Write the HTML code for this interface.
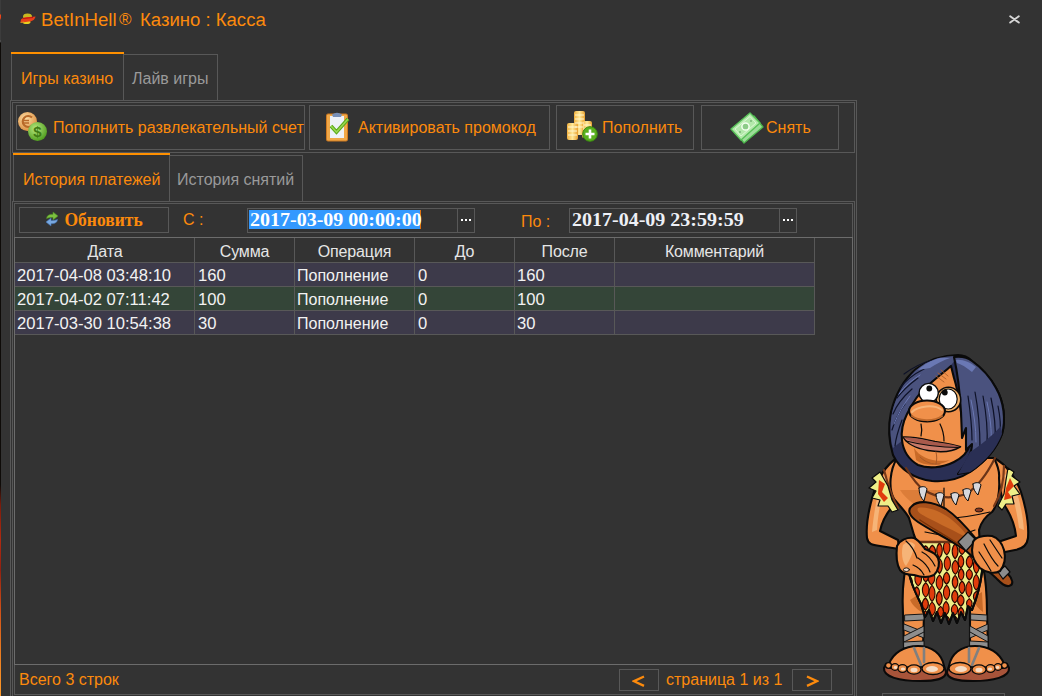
<!DOCTYPE html>
<html><head><meta charset="utf-8">
<style>
html,body{margin:0;padding:0;}
body{width:1042px;height:696px;background:#333333;position:relative;overflow:hidden;font-family:"Liberation Sans",sans-serif;}
.a{position:absolute;}
.b{position:absolute;box-sizing:border-box;border:1px solid #585858;}
.t{position:absolute;white-space:pre;font-size:16px;line-height:18px;}
.or{color:#fc8a0c;}
.hl{position:absolute;height:1px;background:#585858;}
.vl{position:absolute;width:1px;background:#585858;}
.cell{position:absolute;white-space:pre;font-size:16.6px;line-height:18px;color:#f2f2f2;}
.hd{position:absolute;white-space:pre;font-size:16px;letter-spacing:-0.15px;line-height:18px;color:#e6e6e6;text-align:center;}
</style></head>
<body>
<!-- left edge strip -->
<div class="a" style="left:0;top:0;width:1px;height:696px;background:linear-gradient(#3c3c3c 0,#3c3c3c 14px,#f04a1a 15px,#e8401a 18px,#3c3c3c 20px,#3c3c3c 40px,#5a5a5a 41px,#3c3c3c 42px,#0e0b08 43px,#0e0b08 485px,#7a1c0c 505px,#b02a10 540px,#902010 570px,#d05018 610px,#e87a20 650px,#ff9a28 696px);"></div>

<!-- title -->
<svg class="a" style="left:16px;top:8px" width="24" height="20" viewBox="16 8 24 20">
  <ellipse cx="27.5" cy="16.5" rx="4.5" ry="3" fill="#c8b820"/>
  <ellipse cx="26.5" cy="22" rx="4" ry="2" fill="#e8d020"/>
  <path d="M21 19.5 C24 16.5 30 17 35.5 16.5 C35 19 33 21.5 29 21.5 C26 22 22 22.5 20.5 22 Z" fill="#e8401a"/>
  <path d="M23 18.5 L33 17.5" stroke="#c01010" stroke-width="1"/>
  <path d="M20.5 22.5 L24 22" stroke="#d89020" stroke-width="1.2"/>
</svg>
<div class="t or" style="left:41px;top:10px;font-size:18px;line-height:20px;transform:scaleX(1.035);transform-origin:0 0;">BetInHell</div>
<div class="t or" style="left:119px;top:10px;font-size:17px;line-height:20px;">®</div>
<div class="t or" style="left:139.5px;top:10px;font-size:18px;line-height:20px;transform:scaleX(1.03);transform-origin:0 0;">Казино : Касса</div>
<!-- close -->
<svg class="a" style="left:1002px;top:8px" width="24" height="22" viewBox="1002 8 24 22">
  <path d="M1010.2 16.3 L1018.8 22.6 M1018.8 16.3 L1010.2 22.6" stroke="#d6d6d6" stroke-width="1.9" stroke-linecap="round"/>
</svg>

<!-- outer tabs -->
<div class="a" style="left:11px;top:52px;width:113px;height:2px;background:#ff9000;"></div>
<div class="vl" style="left:11px;top:54px;height:46px;"></div>
<div class="vl" style="left:123px;top:54px;height:46px;"></div>
<div class="t or" style="left:21px;top:70px;">Игры казино</div>
<div class="hl" style="left:123px;top:54px;width:95px;"></div>
<div class="vl" style="left:217px;top:54px;height:46px;"></div>
<div class="t" style="left:132px;top:70px;color:#9a9a9a;">Лайв игры</div>

<!-- outer panel -->
<div class="hl" style="left:10px;top:100px;width:847px;"></div>
<div class="vl" style="left:10px;top:100px;height:596px;"></div>
<div class="vl" style="left:856px;top:100px;height:596px;"></div>

<!-- toolbar groupbox -->
<div class="b" style="left:12px;top:102px;width:843px;height:51px;"></div>
<div class="b" style="left:16px;top:105px;width:289px;height:45px;"></div>
<div class="b" style="left:309px;top:105px;width:241px;height:45px;"></div>
<div class="b" style="left:556px;top:105px;width:138px;height:45px;"></div>
<div class="b" style="left:701px;top:105px;width:138px;height:45px;"></div>

<!-- icon 1: coins -->
<svg class="a" style="left:17px;top:111px" width="32" height="32" viewBox="0 0 32 32">
  <defs>
    <radialGradient id="gE" cx="0.4" cy="0.35" r="0.7"><stop offset="0" stop-color="#ffe0a8"/><stop offset="1" stop-color="#d98a3a"/></radialGradient>
    <radialGradient id="gD" cx="0.4" cy="0.35" r="0.7"><stop offset="0" stop-color="#b8e880"/><stop offset="1" stop-color="#4a9a1a"/></radialGradient>
  </defs>
  <circle cx="10.5" cy="10.5" r="9.5" fill="url(#gE)"/>
  <path d="M15 6.5 A5.5 5.5 0 1 0 15 14.5" stroke="#b86a2a" stroke-width="2.2" fill="none"/>
  <path d="M5 9.5 H12 M5 12 H12" stroke="#b86a2a" stroke-width="1.3"/>
  <circle cx="20.5" cy="20.5" r="9.5" fill="url(#gD)"/>
  <text x="20.5" y="26" font-family="Liberation Sans" font-weight="bold" font-size="15" fill="#3f7a14" text-anchor="middle">$</text>
</svg>
<div class="t or" style="left:53px;top:119px;">Пополнить развлекательный счет</div>

<!-- icon 2: clipboard -->
<svg class="a" style="left:324px;top:110px" width="28" height="33" viewBox="0 0 28 33">
  <rect x="2.5" y="4" width="21" height="27" rx="1.5" fill="#f0a848" stroke="#d07a20" stroke-width="1"/>
  <rect x="6" y="6" width="14" height="22" fill="#eef2f8"/>
  <path d="M8 4.5 Q13 1 18 4.5 L17 7 H9 Z" fill="#7890b8"/>
  <path d="M7 16 L12.5 22 L24 9" stroke="#58a818" stroke-width="3.6" fill="none" stroke-linejoin="miter"/>
  <path d="M7 16 L12.5 22 L24 9" stroke="#98d850" stroke-width="1.6" fill="none"/>
</svg>
<div class="t or" style="left:358px;top:119px;">Активировать промокод</div>

<!-- icon 3: coin stacks -->
<svg class="a" style="left:565px;top:110px" width="34" height="34" viewBox="0 0 34 34">
  <defs><linearGradient id="gC" x1="0" x2="1"><stop offset="0" stop-color="#f0b040"/><stop offset="0.5" stop-color="#ffe898"/><stop offset="1" stop-color="#e8a030"/></linearGradient></defs>
  <rect x="9" y="1" width="11" height="24" rx="2" fill="url(#gC)"/>
  <rect x="17" y="11" width="10" height="17" rx="2" fill="url(#gC)"/>
  <rect x="2" y="13" width="11" height="17" rx="2" fill="url(#gC)"/>
  <g stroke="#fff6d0" stroke-width="1">
    <path d="M10 5H19M10 9H19M10 13H19M10 17H19M3 17H12M3 21H12M3 25H12M18 15H26M18 19H26"/>
  </g>
  <circle cx="25" cy="24" r="7.3" fill="#5ab01e" stroke="#3a8a10" stroke-width="1"/>
  <path d="M25 19.5V28.5M20.5 24H29.5" stroke="#fff" stroke-width="2.6"/>
</svg>
<div class="t or" style="left:602px;top:119px;">Пополнить</div>

<!-- icon 4: banknote -->
<svg class="a" style="left:726px;top:106px" width="40" height="40" viewBox="726 106 40 40">
  <polygon points="735,132 754,116 763,127 744,143" fill="#9cdc98" stroke="#4cb84c" stroke-width="1.3" stroke-linejoin="round"/>
  <polygon points="731,129 750,113 760,123 741,140" fill="#b2e8aa" stroke="#58c058" stroke-width="1.4" stroke-linejoin="round"/>
  <polygon points="735,129 750,116.5 756,123 741,136" fill="none" stroke="#dcf8d4" stroke-width="1"/>
  <circle cx="745.5" cy="126.5" r="3.6" fill="#8ccc88" stroke="#f4fff0" stroke-width="1.5"/>
  <circle cx="751" cy="121" r="0.9" fill="#70b070"/><circle cx="740" cy="132" r="0.9" fill="#70b070"/>
</svg>
<div class="t or" style="left:766px;top:119px;">Снять</div>

<!-- inner tabs -->
<div class="a" style="left:13px;top:153px;width:157px;height:2px;background:#ff9000;"></div>
<div class="vl" style="left:13px;top:155px;height:46px;"></div>
<div class="vl" style="left:169px;top:155px;height:46px;"></div>
<div class="t or" style="left:23px;top:171px;">История платежей</div>
<div class="hl" style="left:169px;top:155px;width:134px;"></div>
<div class="vl" style="left:302px;top:155px;height:46px;"></div>
<div class="t" style="left:177px;top:171px;color:#9a9a9a;">История снятий</div>

<!-- inner pane -->
<div class="hl" style="left:12px;top:201px;width:843px;"></div>
<div class="vl" style="left:12px;top:201px;height:495px;"></div>
<div class="vl" style="left:854px;top:201px;height:495px;"></div>

<!-- filter groupbox -->
<div class="hl" style="left:14px;top:203px;width:839px;"></div>
<div class="vl" style="left:14px;top:203px;height:34px;"></div>
<div class="vl" style="left:852px;top:203px;height:34px;"></div>
<div class="b" style="left:19px;top:207px;width:150px;height:26px;"></div>
<svg class="a" style="left:44px;top:211px" width="16" height="16" viewBox="0 0 16 16">
  <path d="M2.5 7.5 Q3 3 9 3.2 V1 L14 5 L9 9 V6.6 Q5 6.4 2.5 7.5Z" fill="#7cc040" stroke="#4a8a20" stroke-width="0.6"/>
  <path d="M13.5 8.5 Q13 13 7 12.8 V15 L2 11 L7 7 V9.4 Q11 9.6 13.5 8.5Z" fill="#78a8e0" stroke="#4070b0" stroke-width="0.6"/>
</svg>
<div class="t" style="left:64.5px;top:210px;font-family:'Liberation Serif',serif;font-weight:bold;font-size:17.5px;line-height:20px;color:#fc8a0c;transform:scaleY(1.12);transform-origin:0 15.5px;">Обновить</div>
<div class="t or" style="left:183px;top:211px;">С :</div>
<!-- date 1 -->
<div class="b" style="left:247px;top:208px;width:228px;height:25px;"></div>
<div class="vl" style="left:457px;top:208px;height:25px;"></div>
<div class="a" style="left:249px;top:210px;width:171px;height:19px;background:#3399ff;"></div>
<div class="a" style="left:420px;top:210px;width:1px;height:19px;background:#e07010;"></div>
<div class="t" style="left:250px;top:209px;font-family:'Liberation Serif',serif;font-weight:bold;font-size:20px;line-height:20px;color:#ffffff;transform:scaleY(0.91);transform-origin:0 16.5px;">2017-03-09 00:00:00</div>
<div class="a" style="left:461px;top:219px;width:2px;height:2px;background:#fff;"></div>
<div class="a" style="left:465px;top:219px;width:2px;height:2px;background:#fff;"></div>
<div class="a" style="left:469px;top:219px;width:2px;height:2px;background:#fff;"></div>
<div class="t or" style="left:521px;top:213px;">По :</div>
<!-- date 2 -->
<div class="b" style="left:569px;top:208px;width:228px;height:25px;"></div>
<div class="vl" style="left:779px;top:208px;height:25px;"></div>
<div class="t" style="left:572px;top:209px;font-family:'Liberation Serif',serif;font-weight:bold;font-size:20px;line-height:20px;color:#eef0f6;transform:scaleY(0.91);transform-origin:0 16.5px;">2017-04-09 23:59:59</div>
<div class="a" style="left:783px;top:219px;width:2px;height:2px;background:#fff;"></div>
<div class="a" style="left:787px;top:219px;width:2px;height:2px;background:#fff;"></div>
<div class="a" style="left:791px;top:219px;width:2px;height:2px;background:#fff;"></div>

<!-- grid -->
<div class="a" style="left:14px;top:237px;width:839px;height:1px;background:#6c6c6c;"></div>
<div class="a" style="left:14px;top:237px;width:1px;height:428px;background:#6c6c6c;"></div>
<div class="a" style="left:852px;top:237px;width:1px;height:428px;background:#6c6c6c;"></div>
<!-- rows -->
<div class="a" style="left:15px;top:263px;width:799px;height:23px;background:#3d3a4a;"></div>
<div class="a" style="left:15px;top:287px;width:799px;height:23px;background:#344538;"></div>
<div class="a" style="left:15px;top:311px;width:799px;height:23px;background:#3d3a4a;"></div>
<div class="hl" style="left:15px;top:262px;width:800px;"></div>
<div class="hl" style="left:15px;top:286px;width:800px;"></div>
<div class="hl" style="left:15px;top:310px;width:800px;"></div>
<div class="hl" style="left:15px;top:334px;width:800px;"></div>
<div class="vl" style="left:194px;top:238px;height:97px;"></div>
<div class="vl" style="left:294px;top:238px;height:97px;"></div>
<div class="vl" style="left:414px;top:238px;height:97px;"></div>
<div class="vl" style="left:514px;top:238px;height:97px;"></div>
<div class="vl" style="left:614px;top:238px;height:97px;"></div>
<div class="vl" style="left:814px;top:238px;height:97px;"></div>
<!-- headers -->
<div class="hd" style="left:16px;top:243px;width:178px;">Дата</div>
<div class="hd" style="left:195px;top:243px;width:99px;">Сумма</div>
<div class="hd" style="left:295px;top:243px;width:119px;">Операция</div>
<div class="hd" style="left:415px;top:243px;width:99px;">До</div>
<div class="hd" style="left:515px;top:243px;width:99px;">После</div>
<div class="hd" style="left:615px;top:243px;width:199px;">Комментарий</div>
<!-- data -->
<div class="cell" style="left:17px;top:267px;">2017-04-08 03:48:10</div>
<div class="cell" style="left:198px;top:267px;">160</div>
<div class="cell" style="left:297px;top:267px;font-size:16px;">Пополнение</div>
<div class="cell" style="left:418px;top:267px;">0</div>
<div class="cell" style="left:517px;top:267px;">160</div>

<div class="cell" style="left:17px;top:291px;">2017-04-02 07:11:42</div>
<div class="cell" style="left:198px;top:291px;">100</div>
<div class="cell" style="left:297px;top:291px;font-size:16px;">Пополнение</div>
<div class="cell" style="left:418px;top:291px;">0</div>
<div class="cell" style="left:517px;top:291px;">100</div>

<div class="cell" style="left:17px;top:315px;">2017-03-30 10:54:38</div>
<div class="cell" style="left:198px;top:315px;">30</div>
<div class="cell" style="left:297px;top:315px;font-size:16px;">Пополнение</div>
<div class="cell" style="left:418px;top:315px;">0</div>
<div class="cell" style="left:517px;top:315px;">30</div>

<!-- footer -->
<div class="a" style="left:14px;top:664px;width:839px;height:1px;background:#6c6c6c;"></div>
<div class="vl" style="left:14px;top:665px;height:30px;"></div>
<div class="vl" style="left:852px;top:665px;height:30px;"></div>
<div class="hl" style="left:14px;top:694px;width:839px;"></div>
<div class="t or" style="left:19px;top:671px;">Всего 3 строк</div>
<div class="b" style="left:619px;top:669px;width:40px;height:22px;"></div>
<svg class="a" style="left:632px;top:675px" width="14" height="13" viewBox="0 0 14 13"><path d="M12 1.5 L2 6.2 L12 10.9" stroke="#fc8a0c" stroke-width="2.3" fill="none"/></svg>
<div class="t or" style="left:666px;top:671px;">страница 1 из 1</div>
<div class="b" style="left:792px;top:669px;width:40px;height:22px;"></div>
<svg class="a" style="left:805px;top:675px" width="14" height="13" viewBox="0 0 14 13"><path d="M2 1.5 L12 6.2 L2 10.9" stroke="#fc8a0c" stroke-width="2.3" fill="none"/></svg>

<!-- bottom right box -->
<div class="hl" style="left:882px;top:693px;width:123px;"></div>
<div class="vl" style="left:882px;top:693px;height:3px;"></div>
<div class="vl" style="left:1004px;top:693px;height:3px;"></div>

<!-- caveman placeholder -->
<svg class="a" style="left:850px;top:340px" width="192" height="356" viewBox="850 340 192 356">
<g stroke="#0a0a0a" stroke-width="2.1" stroke-linejoin="round" stroke-linecap="round">
  <!-- legs -->
  <path d="M906 566 L922 570 L924 614 L923 648 L904 648 L903 614 C902 596 903 580 906 566 Z" fill="#f0904a"/>
  <path d="M970 570 L983 566 C986 580 987 596 987 614 L988 648 L970 648 L970 614 Z" fill="#f0904a"/>
  <path d="M910 600 C913 606 918 610 922 612 L922 592 Z M972 598 C975 605 980 610 983 612 L982 592 Z" fill="#c86a28" stroke="none"/>
  <g stroke="#151515" stroke-width="1" fill="#8e8e8e">
    <path d="M905 615 L924 614 L924 620 L905 621 Z"/>
    <path d="M904 624 L924 632 L924 638 L904 630 Z"/>
    <path d="M904 636 L924 626 L924 632 L904 642 Z"/>
    <path d="M904 642 L924 641 L924 648 L904 648 Z"/>
    <path d="M971 614 L987 615 L987 621 L971 620 Z"/>
    <path d="M970 632 L988 624 L988 630 L970 638 Z"/>
    <path d="M970 626 L988 636 L988 642 L970 632 Z"/>
    <path d="M970 641 L988 642 L988 648 L970 648 Z"/>
  </g>
  <!-- sandals -->
  <path d="M884 668 C883 677 900 681 920 681 C936 681 946 679 946 672 L944 666 L886 664 Z" fill="#a8543a"/>
  <path d="M1009 668 C1010 677 993 681 973 681 C957 681 947 679 947 672 L949 666 L1007 664 Z" fill="#a8543a"/>
  <path d="M889 664 C893 653 904 646 918 646 C932 646 942 654 944 666 L890 668 Z" fill="#f0904a"/>
  <path d="M1004 664 C1000 653 989 646 975 646 C961 646 951 654 949 666 L1003 668 Z" fill="#f0904a"/>
  <g fill="#f0904a" stroke-width="1.3">
    <ellipse cx="888.5" cy="665.5" rx="3" ry="2.8"/><ellipse cx="895" cy="667" rx="3.8" ry="3.3"/><ellipse cx="902.5" cy="668.5" rx="4.5" ry="3.8"/>
    <ellipse cx="914" cy="669.5" rx="7" ry="4.6"/><ellipse cx="933" cy="668.5" rx="11" ry="6"/>
    <ellipse cx="1004.5" cy="665.5" rx="3" ry="2.8"/><ellipse cx="998" cy="667" rx="3.8" ry="3.3"/><ellipse cx="990.5" cy="668.5" rx="4.5" ry="3.8"/>
    <ellipse cx="979" cy="669.5" rx="7" ry="4.6"/><ellipse cx="960" cy="668.5" rx="11" ry="6"/>
  </g>
  <g fill="#f4dcc6" stroke="none">
    <ellipse cx="932" cy="669" rx="6" ry="3"/><ellipse cx="914" cy="670" rx="3.5" ry="2.2"/><ellipse cx="903" cy="669" rx="2.2" ry="1.6"/><ellipse cx="895.5" cy="667.5" rx="1.8" ry="1.4"/>
    <ellipse cx="961" cy="669" rx="6" ry="3"/><ellipse cx="979" cy="670" rx="3.5" ry="2.2"/><ellipse cx="990" cy="669" rx="2.2" ry="1.6"/><ellipse cx="997.5" cy="667.5" rx="1.8" ry="1.4"/>
  </g>
  <path d="M914 648 L921 665 M924 648 L924 662 M979 648 L972 665 M969 648 L969 662" stroke="#808080" stroke-width="2.6"/>
  <!-- left arm -->
  <path d="M897 458 C886 465 878 478 873 495 C868 512 866 528 867 538 C868 544 872 545 880 546 L899 549 L898 540 L880 531 C882 522 886 514 892 507 Z" fill="#f0904a"/>
  <path d="M884 475 C878 490 874 510 872 532 L877 530 C878 512 882 492 888 478 Z" fill="#f6b478" stroke="none"/>
  <!-- right arm -->
  <path d="M994 458 C1006 464 1016 478 1021 492 C1026 508 1029 525 1028 538 C1027 546 1022 549 1015 550 L1000 553 L998 542 L1016 536 C1015 526 1012 516 1003 503 Z" fill="#f0904a"/>
  <path d="M1008 472 C1016 486 1022 506 1024 530 L1019 528 C1016 506 1012 490 1004 476 Z" fill="#f6b478" stroke="none"/>
  <!-- torso -->
  <path d="M897 458 C890 470 888 488 894 499 C900 506 906 512 909 518 L914 535 L918 545 L980 545 L979 530 C981 522 986 516 992 512 C998 505 1000 490 999 478 C1000 470 996 462 994 458 Z" fill="#f0904a"/>
  <path d="M900 490 C910 505 925 512 944 512 L944 490 Z" fill="#c86a28" stroke="none" opacity="0.5"/>
  <path d="M944 488 L944 520 M920 514 C932 520 956 520 990 512 M925 532 C940 536 960 536 975 530" stroke-width="1.2" fill="none"/>
  <ellipse cx="979" cy="510" rx="4" ry="2" fill="#8a3a22" stroke-width="0.8"/>
  <!-- shoulder straps & fur -->
  <path d="M884 470 C888 485 892 498 898 508" stroke="#7a3a1a" stroke-width="2.2" fill="none"/>
  <path d="M1004 466 C1004 482 1000 496 994 506" stroke="#7a3a1a" stroke-width="2.2" fill="none"/>
  <path d="M880 472 L872 478 L876 482 L869 488 L876 491 L872 498 L880 500 L878 506 L888 506 L892 512 L898 510 L892 500 L888 486 Z" fill="#eeee88" stroke-width="1.2"/>
  <path d="M879 480 L885 484 L882 492 L888 498 L884 502 L878 494 Z" fill="#e03c0c" stroke="none"/>
  <path d="M1008 468 L1014 472 L1012 476 L1020 482 L1014 486 L1020 494 L1012 496 L1014 504 L1006 504 L1002 510 L998 506 L1004 494 L1006 480 Z" fill="#eeee88" stroke-width="1.2"/>
  <path d="M1010 478 L1014 486 L1008 492 L1012 498 L1004 500 L1006 488 Z" fill="#e03c0c" stroke="none"/>
  <!-- hair back + beard -->
  <path d="M958 355 C945 355 930 359 916 369 C903 380 895 396 891 412 C888 426 889 442 893 455 C900 470 915 479 932 481 C945 482 958 480 970 472 C985 462 996 450 1002 434 C1006 420 1004 402 996 388 C990 377 982 368 972 361 C968 357 963 355 958 355 Z" fill="#2a2f54"/>
  <path d="M958 356 C942 356 928 359 915 371 C903 383 895 399 892 413 C890 425 890 438 893 448 L903 440 C903 425 910 405 925 388 C935 378 945 370 952 364 Z" fill="#4a527e" stroke="none"/>
  <path d="M897 398 C903 390 910 384 918 378 M893 414 C897 404 904 396 912 389 M892 430 C895 420 899 412 905 404 M895 446 C896 436 899 428 902 420 M904 374 C912 368 922 363 932 360 M900 388 C906 380 914 374 924 369" stroke="#0e1228" stroke-width="1.2" fill="none"/>
  <path d="M899 394 C905 386 912 380 920 375 M894 424 C898 414 904 404 910 396" stroke="#6a78b4" stroke-width="1" fill="none"/>
  <path d="M940 358 C932 360 924 364 918 370 L930 368 C936 364 944 360 950 358 Z" fill="#6a78b4" stroke="none"/>
  <!-- face -->
  <path d="M951 366 C944 372 934 380 926 387 C918 394 912 404 907 414 C903 422 901 432 902 440 C903 450 908 459 918 465 C928 469 942 468 954 462 C962 458 968 452 970 444 C970 432 966 424 962 418 C960 405 958 390 954 378 Z" fill="#f0904a"/>
  <path d="M936 376 L944 382 M938 373 L946 379 M941 370 L948 376" stroke="#b0602a" stroke-width="0.9"/>
  <path d="M914 448 C920 458 935 463 950 460 C940 466 925 467 916 460 Z" fill="#c86a28" stroke="none"/>
  <!-- hair right side over face -->
  <path d="M954 357 C962 356 967 357 972 361 C982 368 990 377 996 388 C1004 402 1006 420 1002 434 C996 450 985 462 970 472 L958 474 C966 464 972 454 972 444 L966 450 L966 428 L962 438 L961 412 C960 395 958 375 954 357 Z" fill="#4a527e"/>
  <path d="M956 360 C962 359 970 362 976 367 L972 372 C966 367 961 364 957 363 Z" fill="#6a78b4" stroke="none"/>
  <path d="M968 396 C970 410 972 425 972 440 M975 392 C978 408 980 426 980 448 M983 396 C986 412 988 428 987 446 M991 398 C994 412 996 426 995 440 M998 406 C1000 416 1001 426 1000 434" stroke="#0e1228" stroke-width="1.2" fill="none"/>
  <path d="M971 400 C974 414 976 428 976 442 M987 402 C990 416 992 430 991 444" stroke="#6a78b4" stroke-width="1" fill="none"/>
  <path d="M970 452 C980 446 992 436 1001 426 L1002 434 C996 450 985 462 970 472 L958 474 Z" fill="#2a2f54" stroke="none"/>
  <!-- eyes -->
  <circle cx="948.5" cy="399.5" r="12.2" fill="#f6b46a" stroke-width="1.5"/>
  <ellipse cx="948.2" cy="399" rx="9" ry="10" fill="#fff" stroke-width="1.2"/>
  <circle cx="928.7" cy="393" r="9.6" fill="#fff" stroke-width="1.4"/>
  <circle cx="929.3" cy="388.5" r="2.9" fill="#0a0a0a" stroke="none"/>
  <circle cx="944.8" cy="392.5" r="2.9" fill="#0a0a0a" stroke="none"/>
  <!-- nose -->
  <ellipse cx="927" cy="411" rx="18" ry="10.5" fill="#f0904a"/>
  <path d="M912 412 C918 406 934 404 942 410" stroke="#f6b478" stroke-width="2" fill="none"/>
  <path d="M912 416 C918 421 934 422 942 416" stroke="#c06a2c" stroke-width="2" fill="none"/>
  <!-- lips -->
  <path d="M903 437 C915 436.5 925 439.5 935 441.5 C945 443 953 444 960.5 446.8 C953 451.5 940 452.5 928 450.5 C917 448.5 907 444 903 437 Z" fill="#c87a68" stroke-width="1.5"/>
  <path d="M903.5 437.5 C915 437 925 440 935 442 C945 443.5 953 444.5 960 446.8 C950 447 938 446.5 928 445 C918 443 909 441 903.5 437.5 Z" fill="#a85a4c" stroke="none"/>
  <path d="M906 441 C918 444 940 447.5 958 447.5" stroke="#0a0a0a" stroke-width="1.1" fill="none"/>
  <path d="M921 424 C922 428 922 432 921 436 M940 424 C943 430 944 436 944 441" stroke-width="1.2" fill="none"/>
  <path d="M920 457 C925 462 932 465 940 464 M936 452 C937 456 937 460 936 464" stroke="#a85a28" stroke-width="1" fill="none"/>
  <!-- necklace -->
  <path d="M906 468 C912 478 918 486 924 490 C935 497 950 500 966 494 C976 488 986 476 995 458" stroke="#6a3418" stroke-width="2.2" fill="none"/>
  <g fill="#d8d8dc" stroke-width="1">
    <path d="M919 488 C921 486 926 486 927 489 L924 501 C921 498 919 494 919 488 Z"/>
    <path d="M936 494 C938 492 943 492 944 495 L941 506 C938 503 936 499 936 494 Z"/>
    <path d="M951 494 C953 492 958 492 959 495 L956 505 C953 502 951 498 951 494 Z"/>
    <path d="M963 490 C965 488 970 488 971 491 L968 501 C965 498 963 495 963 490 Z"/>
    <path d="M973 484 C975 482 980 482 981 485 L978 495 C975 492 973 489 973 484 Z"/>
  </g>
  <!-- skirt -->
  <clipPath id="skc"><path d="M917 542 L974 542 C980 552 983 562 982 572 C980 588 976 600 972 610 L968 606 L965 620 L961 612 L957 623 L953 613 L949 624 L945 613 L941 623 L937 612 L933 621 L929 610 L925 617 L921 604 C916 594 910 582 909 572 C909 560 912 550 917 542 Z"/></clipPath>
  <path d="M917 542 L974 542 C980 552 983 562 982 572 C980 588 976 600 972 610 L968 606 L965 620 L961 612 L957 623 L953 613 L949 624 L945 613 L941 623 L937 612 L933 621 L929 610 L925 617 L921 604 C916 594 910 582 909 572 C909 560 912 550 917 542 Z" fill="#eeee88"/>
  <g clip-path="url(#skc)" fill="#e03c0c" stroke="#2a0800" stroke-width="1.1">
    <path d="M910.9 543.0 C915.1 546.6 915.1 553.8 910.9 557.4 C906.6 553.8 906.6 546.6 910.9 543.0 Z"/><path d="M909.9 558.7 C913.6 562.6 913.6 570.3 909.9 574.2 C906.3 570.3 906.3 562.6 909.9 558.7 Z"/><path d="M909.2 575.7 C913.5 579.1 913.5 586.1 909.2 589.5 C904.9 586.1 904.9 579.1 909.2 575.7 Z"/><path d="M910.1 590.5 C914.2 593.4 914.2 599.1 910.1 602.0 C906.1 599.1 906.1 593.4 910.1 590.5 Z"/><path d="M910.8 602.5 C914.7 605.3 914.7 611.0 910.8 613.8 C907.0 611.0 907.0 605.3 910.8 602.5 Z"/><path d="M909.3 615.1 C913.5 617.8 913.5 623.3 909.3 626.0 C905.0 623.3 905.0 617.8 909.3 615.1 Z"/><path d="M910.7 627.1 C914.3 629.8 914.3 635.2 910.7 637.9 C907.1 635.2 907.1 629.8 910.7 627.1 Z"/><path d="M917.0 539.7 C921.3 543.7 921.3 551.6 917.0 555.6 C912.7 551.6 912.7 543.7 917.0 539.7 Z"/><path d="M916.8 557.1 C921.0 560.4 921.0 567.0 916.8 570.3 C912.7 567.0 912.7 560.4 916.8 557.1 Z"/><path d="M918.2 571.8 C922.6 575.3 922.6 582.4 918.2 585.9 C913.8 582.4 913.8 575.3 918.2 571.8 Z"/><path d="M916.7 586.7 C920.4 589.7 920.4 595.8 916.7 598.9 C913.0 595.8 913.0 589.7 916.7 586.7 Z"/><path d="M916.4 599.4 C920.5 602.4 920.5 608.3 916.4 611.2 C912.3 608.3 912.3 602.4 916.4 599.4 Z"/><path d="M918.0 612.4 C921.9 615.4 921.9 621.4 918.0 624.4 C914.2 621.4 914.2 615.4 918.0 612.4 Z"/><path d="M917.8 625.4 C921.8 628.4 921.8 634.3 917.8 637.3 C913.8 634.3 913.8 628.4 917.8 625.4 Z"/><path d="M925.5 545.8 C929.7 548.3 929.7 553.4 925.5 555.9 C921.3 553.4 921.3 548.3 925.5 545.8 Z"/><path d="M925.0 556.5 C928.8 560.1 928.8 567.5 925.0 571.2 C921.1 567.5 921.1 560.1 925.0 556.5 Z"/><path d="M925.7 571.7 C929.5 574.3 929.5 579.4 925.7 582.0 C922.0 579.4 922.0 574.3 925.7 571.7 Z"/><path d="M925.7 582.7 C930.0 586.3 930.0 593.6 925.7 597.2 C921.3 593.6 921.3 586.3 925.7 582.7 Z"/><path d="M925.4 598.0 C929.4 601.1 929.4 607.1 925.4 610.2 C921.3 607.1 921.3 601.1 925.4 598.0 Z"/><path d="M925.5 610.8 C929.8 614.4 929.8 621.7 925.5 625.3 C921.3 621.7 921.3 614.4 925.5 610.8 Z"/><path d="M924.5 625.8 C928.2 629.7 928.2 637.6 924.5 641.5 C920.8 637.6 920.8 629.7 924.5 625.8 Z"/><path d="M932.3 545.3 C936.6 548.4 936.6 554.4 932.3 557.4 C928.0 554.4 928.0 548.4 932.3 545.3 Z"/><path d="M931.4 558.2 C935.1 561.2 935.1 567.1 931.4 570.1 C927.6 567.1 927.6 561.2 931.4 558.2 Z"/><path d="M931.5 570.7 C935.9 574.3 935.9 581.3 931.5 584.9 C927.1 581.3 927.1 574.3 931.5 570.7 Z"/><path d="M932.0 585.4 C936.0 589.4 936.0 597.4 932.0 601.4 C928.0 597.4 928.0 589.4 932.0 585.4 Z"/><path d="M932.1 602.1 C936.4 605.5 936.4 612.3 932.1 615.7 C927.9 612.3 927.9 605.5 932.1 602.1 Z"/><path d="M931.3 616.6 C935.6 619.2 935.6 624.3 931.3 626.9 C926.9 624.3 926.9 619.2 931.3 616.6 Z"/><path d="M932.7 627.9 C936.4 631.7 936.4 639.2 932.7 642.9 C929.0 639.2 929.0 631.7 932.7 627.9 Z"/><path d="M939.5 543.0 C943.2 546.7 943.2 554.1 939.5 557.8 C935.8 554.1 935.8 546.7 939.5 543.0 Z"/><path d="M939.5 558.4 C943.3 562.2 943.3 569.7 939.5 573.5 C935.7 569.7 935.7 562.2 939.5 558.4 Z"/><path d="M939.5 575.0 C943.9 578.8 943.9 586.3 939.5 590.1 C935.1 586.3 935.1 578.8 939.5 575.0 Z"/><path d="M939.2 591.1 C943.2 594.7 943.2 601.9 939.2 605.5 C935.2 601.9 935.2 594.7 939.2 591.1 Z"/><path d="M940.6 606.4 C944.5 609.1 944.5 614.5 940.6 617.2 C936.7 614.5 936.7 609.1 940.6 606.4 Z"/><path d="M939.3 618.7 C943.3 622.1 943.3 629.0 939.3 632.5 C935.3 629.0 935.3 622.1 939.3 618.7 Z"/><path d="M946.7 540.2 C951.0 543.9 951.0 551.2 946.7 554.9 C942.4 551.2 942.4 543.9 946.7 540.2 Z"/><path d="M947.3 556.2 C951.5 559.8 951.5 567.1 947.3 570.8 C943.2 567.1 943.2 559.8 947.3 556.2 Z"/><path d="M946.6 572.1 C950.7 575.1 950.7 581.2 946.6 584.2 C942.4 581.2 942.4 575.1 946.6 572.1 Z"/><path d="M946.6 585.2 C950.7 588.9 950.7 596.2 946.6 599.9 C942.4 596.2 942.4 588.9 946.6 585.2 Z"/><path d="M946.0 601.3 C950.1 604.8 950.1 611.7 946.0 615.2 C942.0 611.7 942.0 604.8 946.0 601.3 Z"/><path d="M946.9 616.2 C951.1 619.1 951.1 624.9 946.9 627.7 C942.8 624.9 942.8 619.1 946.9 616.2 Z"/><path d="M946.7 629.1 C950.9 632.5 950.9 639.5 946.7 642.9 C942.5 639.5 942.5 632.5 946.7 629.1 Z"/><path d="M955.1 543.9 C959.0 547.6 959.0 555.1 955.1 558.9 C951.2 555.1 951.2 547.6 955.1 543.9 Z"/><path d="M955.3 560.2 C959.7 563.8 959.7 570.8 955.3 574.4 C950.9 570.8 950.9 563.8 955.3 560.2 Z"/><path d="M955.1 575.4 C958.8 578.7 958.8 585.3 955.1 588.6 C951.3 585.3 951.3 578.7 955.1 575.4 Z"/><path d="M954.8 590.0 C959.0 593.2 959.0 599.7 954.8 602.9 C950.7 599.7 950.7 593.2 954.8 590.0 Z"/><path d="M954.6 604.1 C958.8 606.9 958.8 612.4 954.6 615.1 C950.3 612.4 950.3 606.9 954.6 604.1 Z"/><path d="M954.9 616.3 C959.0 619.4 959.0 625.7 954.9 628.8 C950.9 625.7 950.9 619.4 954.9 616.3 Z"/><path d="M953.7 630.0 C957.3 633.5 957.3 640.7 953.7 644.3 C950.1 640.7 950.1 633.5 953.7 630.0 Z"/><path d="M962.1 543.2 C966.2 546.0 966.2 551.7 962.1 554.5 C957.9 551.7 957.9 546.0 962.1 543.2 Z"/><path d="M960.9 555.1 C964.7 558.3 964.7 564.7 960.9 567.9 C957.1 564.7 957.1 558.3 960.9 555.1 Z"/><path d="M961.2 568.5 C964.9 571.5 964.9 577.4 961.2 580.4 C957.4 577.4 957.4 571.5 961.2 568.5 Z"/><path d="M962.0 581.0 C965.9 584.2 965.9 590.6 962.0 593.8 C958.1 590.6 958.1 584.2 962.0 581.0 Z"/><path d="M960.8 594.8 C965.1 597.7 965.1 603.4 960.8 606.3 C956.5 603.4 956.5 597.7 960.8 594.8 Z"/><path d="M961.0 607.2 C965.0 610.1 965.0 615.9 961.0 618.8 C957.1 615.9 957.1 610.1 961.0 607.2 Z"/><path d="M962.0 620.2 C965.7 623.2 965.7 629.4 962.0 632.4 C958.4 629.4 958.4 623.2 962.0 620.2 Z"/><path d="M970.1 542.4 C974.2 545.4 974.2 551.4 970.1 554.4 C966.1 551.4 966.1 545.4 970.1 542.4 Z"/><path d="M969.5 555.7 C973.7 558.8 973.7 565.1 969.5 568.2 C965.2 565.1 965.2 558.8 969.5 555.7 Z"/><path d="M969.3 569.1 C973.4 571.8 973.4 577.2 969.3 580.0 C965.3 577.2 965.3 571.8 969.3 569.1 Z"/><path d="M968.9 581.4 C973.0 585.4 973.0 593.3 968.9 597.2 C964.8 593.3 964.8 585.4 968.9 581.4 Z"/><path d="M969.3 598.6 C973.0 601.1 973.0 606.1 969.3 608.6 C965.6 606.1 965.6 601.1 969.3 598.6 Z"/><path d="M970.0 609.7 C974.1 612.4 974.1 617.9 970.0 620.6 C965.9 617.9 965.9 612.4 970.0 609.7 Z"/><path d="M968.8 621.5 C972.6 624.6 972.6 630.9 968.8 634.0 C965.0 630.9 965.0 624.6 968.8 621.5 Z"/><path d="M976.8 541.0 C981.1 545.0 981.1 552.9 976.8 556.8 C972.5 552.9 972.5 545.0 976.8 541.0 Z"/><path d="M976.4 557.6 C980.4 561.5 980.4 569.5 976.4 573.5 C972.4 569.5 972.4 561.5 976.4 557.6 Z"/><path d="M976.2 574.3 C980.2 578.2 980.2 586.2 976.2 590.2 C972.2 586.2 972.2 578.2 976.2 574.3 Z"/><path d="M976.5 591.2 C980.6 593.8 980.6 599.2 976.5 601.9 C972.4 599.2 972.4 593.8 976.5 591.2 Z"/><path d="M975.6 602.7 C979.9 606.3 979.9 613.7 975.6 617.4 C971.4 613.7 971.4 606.3 975.6 602.7 Z"/><path d="M977.2 618.4 C981.5 621.3 981.5 627.1 977.2 630.0 C972.8 627.1 972.8 621.3 977.2 618.4 Z"/>
  </g>
  <path d="M917 542 L974 542 C980 552 983 562 982 572 C980 588 976 600 972 610 L968 606 L965 620 L961 612 L957 623 L953 613 L949 624 L945 613 L941 623 L937 612 L933 621 L929 610 L925 617 L921 604 C916 594 910 582 909 572 C909 560 912 550 917 542 Z" fill="none"/>
  <path d="M917 542 L974 542" stroke="#6a3418" stroke-width="2.6" fill="none"/>
  <!-- club -->
  <path d="M912 506 C918 500 932 501 946 509 C958 517 968 529 976 539 L1008 574 C1013 579 1014 585 1009 586 C1004 587 1000 582 996 578 L964 549 C950 540 930 530 918 522 C909 516 907 510 912 506 Z" fill="#a8501a"/>
  <path d="M918 508 C928 506 942 512 952 520 C962 528 966 534 968 538 C956 532 940 524 928 518 C920 514 916 511 918 508 Z" fill="#c86a26" stroke="none"/><path d="M920 520 C935 530 950 538 964 548" stroke="#7a3208" stroke-width="1.5" fill="none"/>
  <path d="M958 542 L968 532 L976 540 L966 551 Z" fill="#8c8c8c" stroke-width="1.2"/>
  <path d="M998 572 L1005 566 L1010 572 L1003 579 Z" fill="#8c8c8c" stroke-width="1.2"/>
  <!-- left hand -->
  <path d="M897 546 C900 540 907 537 914 538 C919 540 922 545 925 549 C930 551 936 553 938 558 C940 563 939 570 934 575 C928 578 920 577 914 575 C908 575 903 574 900 570 C897 565 896 555 897 546 Z" fill="#f0904a"/>
  <path d="M903 545 C907 541 912 541 915 545 C913 552 910 560 906 566 C902 562 901 552 903 545 Z" fill="#f6b478" stroke="none"/>
  <path d="M906 541 C912 546 915 552 917 558 M922 552 C928 555 932 560 935 566 M918 558 C924 562 928 566 930 572 M913 565 C918 567 922 571 924 575" stroke-width="1.2" fill="none"/>
  <ellipse cx="906.4" cy="569.7" rx="3" ry="1.8" fill="#f2dccb" stroke-width="0.9"/>
  <!-- right hand -->
  <path d="M973 542 C975 537 984 535 992 536 C998 538 1002 543 1004 550 C1006 558 1004 566 1000 571 C995 574 986 573 980 568 C975 563 972 556 972 550 Z" fill="#f0904a"/>
  <path d="M984 544 C988 552 992 560 998 566 M979 552 C983 558 987 564 991 571 M990 540 C994 546 998 552 1002 558" stroke-width="1.2" fill="none"/>
</g>
</svg>

</body></html>
